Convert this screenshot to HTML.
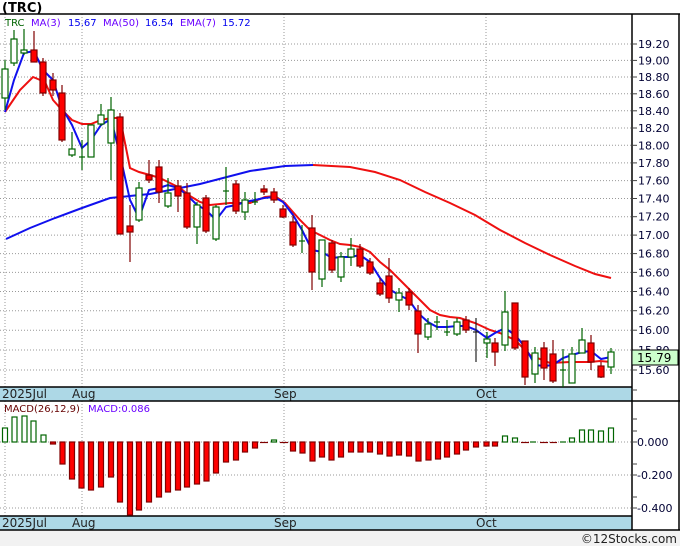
<!DOCTYPE html>
<html><head><meta charset="utf-8"><style>
html,body{margin:0;padding:0;background:#fff}
body{width:680px;height:546px;overflow:hidden;font-family:"Liberation Sans","DejaVu Sans",sans-serif}
</style></head><body>
<svg width="680" height="546" xmlns="http://www.w3.org/2000/svg" style="display:block;font-family:'DejaVu Sans','Liberation Sans',sans-serif">
<rect x="0" y="0" width="680" height="546" fill="#fff"/>
<rect x="0" y="530" width="680" height="16" fill="#f2f2f2"/>
<text x="2" y="12" font-size="13" font-weight="bold" fill="#000">(TRC)</text>
<g stroke="#999" stroke-width="1" stroke-dasharray="1,2">
<line x1="0" x2="632" y1="44" y2="44"/><line x1="0" x2="632" y1="60.4" y2="60.4"/><line x1="0" x2="632" y1="77" y2="77"/><line x1="0" x2="632" y1="93.8" y2="93.8"/><line x1="0" x2="632" y1="110.8" y2="110.8"/><line x1="0" x2="632" y1="128" y2="128"/><line x1="0" x2="632" y1="145.3" y2="145.3"/><line x1="0" x2="632" y1="162.9" y2="162.9"/><line x1="0" x2="632" y1="180.6" y2="180.6"/><line x1="0" x2="632" y1="198.5" y2="198.5"/><line x1="0" x2="632" y1="216.7" y2="216.7"/><line x1="0" x2="632" y1="235.1" y2="235.1"/><line x1="0" x2="632" y1="253.6" y2="253.6"/><line x1="0" x2="632" y1="272.4" y2="272.4"/><line x1="0" x2="632" y1="291.5" y2="291.5"/><line x1="0" x2="632" y1="310.7" y2="310.7"/><line x1="0" x2="632" y1="330.2" y2="330.2"/><line x1="0" x2="632" y1="350" y2="350"/><line x1="0" x2="632" y1="370" y2="370"/>
<line x1="0" x2="632" y1="442" y2="442"/><line x1="0" x2="632" y1="475" y2="475"/><line x1="0" x2="632" y1="508" y2="508"/>
<line x1="5" x2="5" y1="14" y2="387"/><line x1="82" x2="82" y1="14" y2="387"/><line x1="284" x2="284" y1="14" y2="387"/><line x1="486" x2="486" y1="14" y2="387"/>
<line x1="5" x2="5" y1="401" y2="516"/><line x1="82" x2="82" y1="401" y2="516"/><line x1="284" x2="284" y1="401" y2="516"/><line x1="486" x2="486" y1="401" y2="516"/>
</g>
<!-- bands -->
<rect x="0" y="387" width="632" height="14" fill="#add8e6"/>
<rect x="0" y="516" width="632" height="14" fill="#add8e6"/>
<g font-size="12" fill="#222">
<text x="2" y="398">2025Jul</text><text x="72" y="398">Aug</text><text x="274" y="398">Sep</text><text x="476" y="398">Oct</text>
<text x="2" y="527">2025Jul</text><text x="72" y="527">Aug</text><text x="274" y="527">Sep</text><text x="476" y="527">Oct</text>
</g>
<g stroke="#000" stroke-width="1.5" fill="none">
<line x1="0" x2="680" y1="14" y2="14"/>
<line x1="0" x2="632" y1="387" y2="387"/>
<line x1="0" x2="680" y1="401" y2="401"/>
<line x1="0" x2="632" y1="516" y2="516"/>
<line x1="0" x2="680" y1="530" y2="530"/>
<line x1="632" x2="632" y1="14" y2="530"/>
<line x1="679" x2="679" y1="14" y2="530"/>
</g>
<!-- right axis -->
<g stroke="#444" stroke-width="1">
<line x1="632" x2="637" y1="44" y2="44"/><line x1="632" x2="637" y1="60.4" y2="60.4"/><line x1="632" x2="637" y1="77" y2="77"/><line x1="632" x2="637" y1="93.8" y2="93.8"/><line x1="632" x2="637" y1="110.8" y2="110.8"/><line x1="632" x2="637" y1="128" y2="128"/><line x1="632" x2="637" y1="145.3" y2="145.3"/><line x1="632" x2="637" y1="162.9" y2="162.9"/><line x1="632" x2="637" y1="180.6" y2="180.6"/><line x1="632" x2="637" y1="198.5" y2="198.5"/><line x1="632" x2="637" y1="216.7" y2="216.7"/><line x1="632" x2="637" y1="235.1" y2="235.1"/><line x1="632" x2="637" y1="253.6" y2="253.6"/><line x1="632" x2="637" y1="272.4" y2="272.4"/><line x1="632" x2="637" y1="291.5" y2="291.5"/><line x1="632" x2="637" y1="310.7" y2="310.7"/><line x1="632" x2="637" y1="330.2" y2="330.2"/><line x1="632" x2="637" y1="350" y2="350"/><line x1="632" x2="637" y1="370" y2="370"/><line x1="632" x2="637" y1="390" y2="390"/>
<line x1="632" x2="637" y1="419" y2="419"/><line x1="632" x2="637" y1="431" y2="431"/><line x1="632" x2="637" y1="442" y2="442"/><line x1="632" x2="637" y1="464" y2="464"/><line x1="632" x2="637" y1="475" y2="475"/><line x1="632" x2="637" y1="497" y2="497"/><line x1="632" x2="637" y1="508" y2="508"/>
</g>
<g font-size="11" fill="#000033">
<text x="638" y="48">19.20</text><text x="638" y="64.4">19.00</text><text x="638" y="81">18.80</text><text x="638" y="97.8">18.60</text><text x="638" y="114.8">18.40</text><text x="638" y="132">18.20</text><text x="638" y="149.3">18.00</text><text x="638" y="166.9">17.80</text><text x="638" y="184.6">17.60</text><text x="638" y="202.5">17.40</text><text x="638" y="220.7">17.20</text><text x="638" y="239.1">17.00</text><text x="638" y="257.6">16.80</text><text x="638" y="276.4">16.60</text><text x="638" y="295.5">16.40</text><text x="638" y="314.7">16.20</text><text x="638" y="334.2">16.00</text><text x="638" y="354">15.80</text><text x="638" y="374">15.60</text>
<text x="637" y="446">0.000</text><text x="637" y="479">-0.200</text><text x="637" y="512">-0.400</text>
</g>
<rect x="632" y="350" width="46" height="15" fill="#ccffcc" stroke="#000" stroke-width="1"/>
<text x="637" y="362" font-size="12" fill="#000">15.79</text>
<!-- legend -->
<g font-size="10">
<text x="5" y="26" fill="#006400">TRC</text><text x="31" y="26" fill="#6a00ff">MA(3)</text><text x="68" y="26" fill="#0000ee">15.67</text><text x="103" y="26" fill="#6a00ff">MA(50)</text><text x="145" y="26" fill="#0000ee">16.54</text><text x="180" y="26" fill="#6a00ff">EMA(7)</text><text x="222" y="26" fill="#0000ee">15.72</text>
<text x="4" y="412" fill="#660000">MACD(26,12,9)</text><text x="88" y="412" fill="#6a00ff">MACD:0.086</text>
</g>
<!-- MA50 -->
<polyline fill="none" stroke="#1010ee" stroke-width="2" points="6,239 30,228 55,218 82,208 110,198 150,194 200,184 250,171 285,166 313,165"/>
<polyline fill="none" stroke="#ee1010" stroke-width="2" points="313,165 350,167 375,172 400,180 425,192 450,203 475,215 500,230 525,243 550,255 575,266 595,274 611,278"/>
<!-- EMA7 -->
<polyline fill="none" stroke="#ee1010" stroke-width="2" points="5,112 20,90 33,77 45,82 53,100 62,110 72,120 82,124 91,124 101,120 111,118 120,118 130,168 139,172 150,175 160,178 170,183 180,188 190,196 200,202 210,205 230,203 250,203 265,197 275,196 285,203 300,220 310,230 320,235 330,240 340,244 350,245 360,247 370,252 380,262 390,270 400,280 410,290 420,300 430,310 440,315 450,317 460,318 475,323 490,330 500,333 515,340 530,355 550,363 570,362 590,362 600,361 611,362"/>
<!-- MA3 -->
<polyline fill="none" stroke="#1010ee" stroke-width="2" points="5,112 14,80 24,53 34,51 43,70 53,80 62,108 72,125 82,148 91,140 101,125 111,119 120,155 130,200 139,218 149,190 159,188 168,185 178,188 187,195 197,205 206,210 216,220 226,207 236,205 245,202 255,200 264,198 274,197 283,202 293,215 302,230 312,250 322,252 332,258 341,257 351,257 360,255 370,262 380,278 389,289 399,295 409,300 418,313 428,322 437,327 447,327 457,326 466,326 476,330 487,338 495,333 505,328 515,335 525,347 535,365 544,366 553,365 563,358 572,355 582,352 591,351 601,359 611,357"/>
<!-- green candles -->
<g stroke="#006400" stroke-width="1.2" fill="#fff">
<line x1="5" x2="5" y1="60" y2="110"/><rect x="2" y="69" width="6" height="29"/>
<line x1="14" x2="14" y1="30" y2="66"/><rect x="11" y="39" width="6" height="24"/>
<line x1="24" x2="24" y1="29" y2="55"/><rect x="21" y="50" width="6" height="3"/>
<line x1="72" x2="72" y1="132" y2="157"/><rect x="69" y="149" width="6" height="6"/>
<line x1="82" x2="82" y1="140" y2="170"/><line x1="79" x2="85" y1="157" y2="157"/>
<rect x="88" y="125" width="6" height="32"/>
<line x1="101" x2="101" y1="104" y2="126"/><rect x="98" y="115" width="6" height="9"/>
<line x1="111" x2="111" y1="97" y2="180"/><rect x="108" y="110" width="6" height="33"/>
<line x1="139" x2="139" y1="182" y2="222"/><rect x="136" y="188" width="6" height="32"/>
<line x1="168" x2="168" y1="178" y2="208"/><rect x="165" y="193" width="6" height="13"/>
<line x1="197" x2="197" y1="202" y2="244"/><rect x="194" y="205" width="6" height="22"/>
<line x1="216" x2="216" y1="205" y2="241"/><rect x="213" y="207" width="6" height="32"/>
<line x1="226" x2="226" y1="167" y2="205"/><line x1="223" x2="229" y1="191" y2="191"/>
<line x1="245" x2="245" y1="192" y2="220"/><rect x="242" y="200" width="6" height="12"/>
<line x1="255" x2="255" y1="192" y2="205"/><line x1="252" x2="258" y1="202" y2="202"/>
<line x1="302" x2="302" y1="225" y2="253"/><line x1="299" x2="305" y1="241" y2="241"/>
<line x1="322" x2="322" y1="240" y2="287"/><rect x="319" y="240" width="6" height="39"/>
<line x1="341" x2="341" y1="252" y2="282"/><rect x="338" y="257" width="6" height="20"/>
<line x1="351" x2="351" y1="238" y2="266"/><rect x="348" y="249" width="6" height="8"/>
<line x1="399" x2="399" y1="288" y2="312"/><rect x="396" y="293" width="6" height="7"/>
<line x1="428" x2="428" y1="318" y2="340"/><rect x="425" y="324" width="6" height="13"/>
<line x1="437" x2="437" y1="316" y2="330"/><line x1="434" x2="440" y1="322" y2="322"/>
<line x1="447" x2="447" y1="320" y2="336"/><line x1="444" x2="450" y1="332" y2="332"/>
<line x1="457" x2="457" y1="318" y2="336"/><rect x="454" y="322" width="6" height="12"/>
<line x1="487" x2="487" y1="332" y2="358"/><rect x="484" y="339" width="6" height="4"/>
<line x1="505" x2="505" y1="291" y2="351"/><rect x="502" y="312" width="6" height="33"/>
<line x1="535" x2="535" y1="347" y2="383"/><rect x="532" y="353" width="6" height="21"/>
<line x1="563" x2="563" y1="349" y2="387"/><line x1="560" x2="566" y1="370" y2="370"/>
<line x1="572" x2="572" y1="347" y2="383"/><rect x="569" y="354" width="6" height="29"/>
<line x1="582" x2="582" y1="328" y2="353"/><rect x="579" y="340" width="6" height="13"/>
<line x1="611" x2="611" y1="348" y2="374"/><rect x="608" y="352" width="6" height="15"/>
</g>
<line x1="476" x2="476" y1="318" y2="362" stroke="#222" stroke-width="1.2"/><line x1="473" x2="479" y1="332" y2="332" stroke="#222" stroke-width="1.2"/>
<!-- red candles -->
<g stroke="#800000" stroke-width="1.2" fill="#ff0000">
<line x1="34" x2="34" y1="31" y2="62"/><rect x="31" y="50" width="6" height="12"/>
<line x1="43" x2="43" y1="58" y2="96"/><rect x="40" y="62" width="6" height="31"/>
<line x1="53" x2="53" y1="73" y2="96"/><rect x="50" y="80" width="6" height="10"/>
<line x1="62" x2="62" y1="85" y2="142"/><rect x="59" y="93" width="6" height="47"/>
<line x1="120" x2="120" y1="113" y2="234"/><rect x="117" y="117" width="6" height="117"/>
<line x1="130" x2="130" y1="205" y2="262"/><rect x="127" y="226" width="6" height="6"/>
<line x1="149" x2="149" y1="160" y2="183"/><rect x="146" y="175" width="6" height="5"/>
<line x1="159" x2="159" y1="160" y2="203"/><rect x="156" y="167" width="6" height="25"/>
<line x1="178" x2="178" y1="180" y2="212"/><rect x="175" y="186" width="6" height="10"/>
<line x1="187" x2="187" y1="183" y2="229"/><rect x="184" y="193" width="6" height="34"/>
<line x1="206" x2="206" y1="195" y2="233"/><rect x="203" y="198" width="6" height="33"/>
<line x1="236" x2="236" y1="180" y2="214"/><rect x="233" y="184" width="6" height="27"/>
<line x1="264" x2="264" y1="185" y2="195"/><rect x="261" y="189" width="6" height="3"/>
<line x1="274" x2="274" y1="188" y2="203"/><rect x="271" y="192" width="6" height="8"/>
<line x1="283" x2="283" y1="205" y2="218"/><rect x="280" y="209" width="6" height="8"/>
<line x1="293" x2="293" y1="215" y2="247"/><rect x="290" y="222" width="6" height="23"/>
<line x1="312" x2="312" y1="215" y2="290"/><rect x="309" y="228" width="6" height="44"/>
<line x1="332" x2="332" y1="240" y2="273"/><rect x="329" y="243" width="6" height="27"/>
<line x1="360" x2="360" y1="244" y2="268"/><rect x="357" y="249" width="6" height="17"/>
<line x1="370" x2="370" y1="258" y2="275"/><rect x="367" y="262" width="6" height="11"/>
<line x1="380" x2="380" y1="278" y2="296"/><rect x="377" y="283" width="6" height="11"/>
<line x1="389" x2="389" y1="258" y2="303"/><rect x="386" y="276" width="6" height="22"/>
<line x1="409" x2="409" y1="288" y2="310"/><rect x="406" y="292" width="6" height="13"/>
<line x1="418" x2="418" y1="305" y2="353"/><rect x="415" y="311" width="6" height="23"/>
<line x1="466" x2="466" y1="316" y2="333"/><rect x="463" y="320" width="6" height="10"/>
<line x1="495" x2="495" y1="338" y2="366"/><rect x="492" y="343" width="6" height="9"/>
<line x1="515" x2="515" y1="303" y2="350"/><rect x="512" y="303" width="6" height="45"/>
<line x1="525" x2="525" y1="341" y2="385"/><rect x="522" y="341" width="6" height="36"/>
<line x1="544" x2="544" y1="342" y2="380"/><rect x="541" y="348" width="6" height="20"/>
<line x1="553" x2="553" y1="340" y2="383"/><rect x="550" y="354" width="6" height="27"/>
<line x1="591" x2="591" y1="335" y2="370"/><rect x="588" y="343" width="6" height="19"/>
<line x1="601" x2="601" y1="362" y2="378"/><rect x="598" y="366" width="6" height="11"/>
</g>
<!-- MACD hist green -->
<g stroke="#006400" stroke-width="1.2" fill="#fff">
<rect x="2.5" y="428" width="5" height="14"/><rect x="12" y="417" width="5" height="25"/><rect x="22" y="416" width="5" height="26"/><rect x="31" y="421" width="5" height="21"/><rect x="41" y="435" width="5" height="7"/>
<rect x="271.5" y="440" width="5" height="2"/>
<rect x="502.5" y="436" width="5" height="6"/><rect x="512.5" y="438" width="5" height="4"/>
<line x1="530" x2="536" y1="442" y2="442"/><line x1="560" x2="566" y1="442" y2="442"/>
<rect x="569.5" y="438" width="5" height="4"/><rect x="579.5" y="430" width="5" height="12"/><rect x="588.5" y="430" width="5" height="12"/><rect x="598.5" y="431" width="5" height="11"/><rect x="608.5" y="428" width="5" height="14"/>
</g>
<g stroke="#800000" stroke-width="1.2" fill="#ff0000">
<rect x="50.5" y="442" width="5" height="2"/><rect x="60" y="442" width="5" height="22"/><rect x="69.5" y="442" width="5" height="37"/><rect x="79" y="442" width="5" height="46"/><rect x="88.5" y="442" width="5" height="48"/><rect x="98.5" y="442" width="5" height="45"/><rect x="108.5" y="442" width="5" height="35"/><rect x="117.5" y="442" width="5" height="60"/><rect x="127.5" y="442" width="5" height="73"/><rect x="136.5" y="442" width="5" height="68"/><rect x="146.5" y="442" width="5" height="60"/><rect x="156.5" y="442" width="5" height="55"/><rect x="165.5" y="442" width="5" height="50"/><rect x="175.5" y="442" width="5" height="48"/><rect x="184.5" y="442" width="5" height="45"/><rect x="194.5" y="442" width="5" height="42"/><rect x="204" y="442" width="5" height="39"/><rect x="213.5" y="442" width="5" height="31"/><rect x="223.5" y="442" width="5" height="20"/><rect x="233.5" y="442" width="5" height="18"/><rect x="242.5" y="442" width="5" height="10"/><rect x="252.5" y="442" width="5" height="6"/><line x1="260" x2="268" y1="442.5" y2="442.5"/><line x1="280" x2="288" y1="442.5" y2="442.5"/>
<rect x="290.5" y="442" width="5" height="9"/><rect x="300" y="442" width="5" height="11"/><rect x="310" y="442" width="5" height="19"/><rect x="319.5" y="442" width="5" height="15"/><rect x="329" y="442" width="5" height="18"/><rect x="338.5" y="442" width="5" height="15"/><rect x="348.5" y="442" width="5" height="10"/><rect x="358" y="442" width="5" height="10"/><rect x="367.5" y="442" width="5" height="10"/><rect x="377.5" y="442" width="5" height="12"/><rect x="387" y="442" width="5" height="14"/><rect x="396.5" y="442" width="5" height="13"/><rect x="406.5" y="442" width="5" height="14"/><rect x="416" y="442" width="5" height="19"/><rect x="426" y="442" width="5" height="18"/><rect x="435.5" y="442" width="5" height="17"/><rect x="444.5" y="442" width="5" height="15"/><rect x="454.5" y="442" width="5" height="12"/><rect x="463.5" y="442" width="5" height="8"/><rect x="473.5" y="442" width="5" height="5"/><rect x="484" y="442" width="5" height="4"/><rect x="492.5" y="442" width="5" height="4"/>
<line x1="521" x2="529" y1="442.5" y2="442.5"/><line x1="540" x2="548" y1="442.5" y2="442.5"/><line x1="550" x2="557" y1="442.5" y2="442.5"/>
</g>
<text x="677" y="543" font-size="12" fill="#222" text-anchor="end">©12Stocks.com</text>
</svg>
</body></html>
